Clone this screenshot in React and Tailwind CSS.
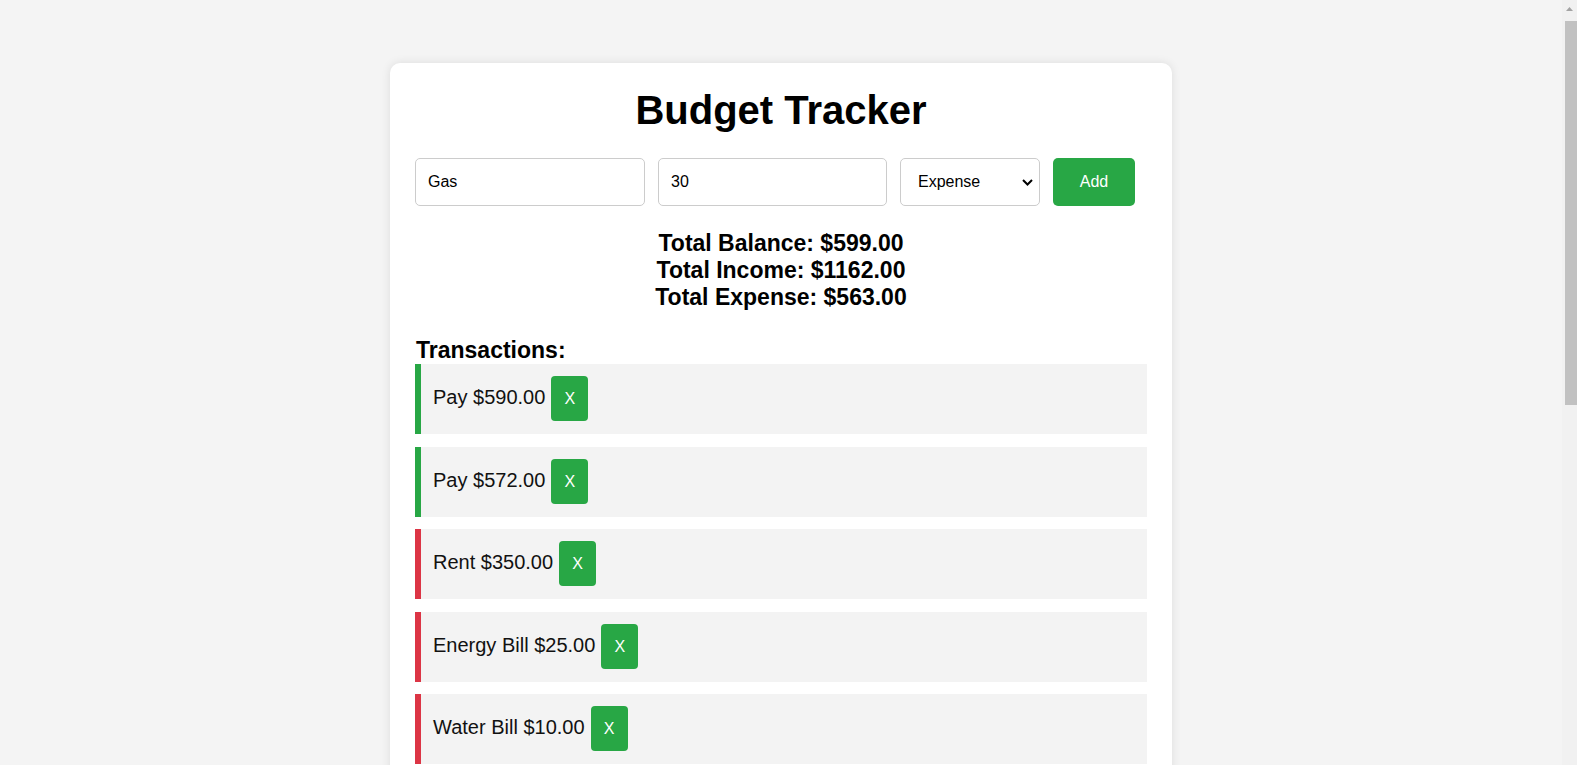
import React from "react";

const transactions = [
  { text: "Pay", amount: "590.00", type: "income" },
  { text: "Pay", amount: "572.00", type: "income" },
  { text: "Rent", amount: "350.00", type: "expense" },
  { text: "Energy Bill", amount: "25.00", type: "expense" },
  { text: "Water Bill", amount: "10.00", type: "expense" },
];

export default function App() {
  return (
    <div className="flex h-[765px] overflow-hidden bg-[#f4f4f4] font-['Liberation_Sans',Arial,sans-serif] text-black">
      <div className="h-full flex-1 overflow-hidden pt-[63px]">
        <div className="mx-auto w-[782px] rounded-[10px] bg-white px-[25px] pt-[24px] pb-[40px] shadow-[0_0_10px_rgba(0,0,0,0.1)]">
          <h1 className="text-center text-[40px] font-bold leading-[46px]">Budget Tracker</h1>

          <div className="mt-[25px] flex items-center gap-[13px]">
            <input
              type="text"
              defaultValue="Gas"
              className="h-[48px] w-[230px] rounded-[5px] border border-[#cccccc] bg-white px-[12px] text-[16px] text-black outline-none"
            />
            <input
              type="text"
              defaultValue="30"
              className="h-[48px] w-[229px] rounded-[5px] border border-[#cccccc] bg-white px-[12px] text-[16px] text-black outline-none"
            />
            <div className="relative h-[48px] w-[140px]">
              <select
                defaultValue="expense"
                className="h-full w-full appearance-none rounded-[5px] border border-[#cccccc] bg-white pl-[17px] text-[16px] text-black outline-none"
              >
                <option value="income">Income</option>
                <option value="expense">Expense</option>
              </select>
              <svg
                className="pointer-events-none absolute left-[122px] top-[21px]"
                width="11"
                height="7"
                viewBox="0 0 11 7"
                fill="none"
              >
                <path d="M1 1L5.5 5.5L10 1" stroke="#000" strokeWidth="2" />
              </svg>
            </div>
            <button className="h-[48px] w-[82px] rounded-[5px] bg-[#28a745] text-[16px] text-white">Add</button>
          </div>

          <div className="mt-[24px] text-center text-[23px] font-bold leading-[27px]">
            <div>Total Balance: $599.00</div>
            <div>Total Income: $1162.00</div>
            <div>Total Expense: $563.00</div>
          </div>

          <h3 className="mt-[26px] pl-px text-[23px] font-bold leading-[27px]">Transactions:</h3>

          <ul className="flex flex-col gap-[12.5px]">
            {transactions.map((t, i) => (
              <li
                key={i}
                className={
                  "flex h-[70px] items-baseline bg-[#f3f3f3] pl-[12px] pt-[12px] text-[20px] leading-[23px] text-[#111] border-l-[6px] " +
                  (t.type === "income" ? "border-[#28a745]" : "border-[#dc3545]")
                }
              >
                <span>
                  {t.text} ${t.amount}
                </span>
                <button className="ml-[6px] w-[37px] rounded-[4px] bg-[#28a745] py-[13px] text-[16px] leading-[19px] text-white">
                  X
                </button>
              </li>
            ))}
          </ul>
        </div>
      </div>

      <div className="flex h-full w-[15px] shrink-0 flex-col items-center bg-[#f1f1f1]">
        <div className="flex h-[17px] w-full items-center justify-center">
          <svg width="7" height="4" viewBox="0 0 7 4">
            <path d="M0 4L3.5 0L7 4Z" fill="#a3a3a3" />
          </svg>
        </div>
        <div className="ml-[3px] mt-[4px] h-[384px] w-[12px] bg-[#c1c1c1]" />
      </div>
    </div>
  );
}
